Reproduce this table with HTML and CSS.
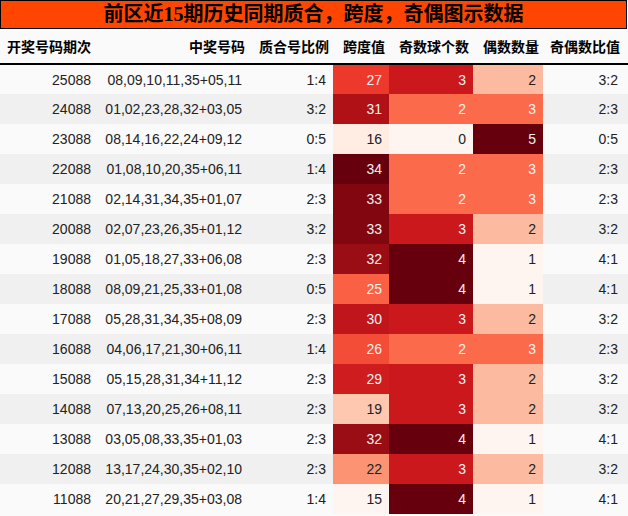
FILE: index.html
```html
<!DOCTYPE html>
<html lang="zh">
<head>
<meta charset="utf-8">
<title>前区近15期历史同期质合，跨度，奇偶图示数据</title>
<link rel="stylesheet" href="styles.css">
</head>
<body>
<div class="page">
  <div class="title">前区近15期历史同期质合，跨度，奇偶图示数据</div>
  <table class="grid">
    <colgroup>
      <col class="c1"><col class="c2"><col class="c3"><col class="c4"><col class="c5"><col class="c6"><col class="c7">
    </colgroup>
    <thead>
      <tr>
        <th class="left">开奖号码期次</th>
        <th>中奖号码</th>
        <th>质合号比例</th>
        <th>跨度值</th>
        <th>奇数球个数</th>
        <th>偶数数量</th>
        <th class="last">奇偶数比值</th>
      </tr>
    </thead>
    <tbody>
      <tr><td>25088</td><td>08,09,10,11,35+05,11</td><td>1:4</td><td class="lt" style="background:#ed392b">27</td><td class="lt" style="background:#cb181d">3</td><td style="background:#fcbba1">2</td><td class="last">3:2</td></tr>
      <tr><td>24088</td><td>01,02,23,28,32+03,05</td><td>3:2</td><td class="lt" style="background:#af1117">31</td><td class="lt" style="background:#fb6a4a">2</td><td class="lt" style="background:#fb6a4a">3</td><td class="last">2:3</td></tr>
      <tr><td>23088</td><td>08,14,16,22,24+09,12</td><td>0:5</td><td style="background:#ffece3">16</td><td style="background:#fff5f0">0</td><td class="lt" style="background:#67000d">5</td><td class="last">0:5</td></tr>
      <tr><td>22088</td><td>01,08,10,20,35+06,11</td><td>1:4</td><td class="lt" style="background:#67000d">34</td><td class="lt" style="background:#fb6a4a">2</td><td class="lt" style="background:#fb6a4a">3</td><td class="last">2:3</td></tr>
      <tr><td>21088</td><td>02,14,31,34,35+01,07</td><td>2:3</td><td class="lt" style="background:#810610">33</td><td class="lt" style="background:#fb6a4a">2</td><td class="lt" style="background:#fb6a4a">3</td><td class="last">2:3</td></tr>
      <tr><td>20088</td><td>02,07,23,26,35+01,12</td><td>3:2</td><td class="lt" style="background:#810610">33</td><td class="lt" style="background:#cb181d">3</td><td style="background:#fcbba1">2</td><td class="last">3:2</td></tr>
      <tr><td>19088</td><td>01,05,18,27,33+06,08</td><td>2:3</td><td class="lt" style="background:#9b0d14">32</td><td class="lt" style="background:#67000d">4</td><td style="background:#fff5f0">1</td><td class="last">4:1</td></tr>
      <tr><td>18088</td><td>08,09,21,25,33+01,08</td><td>0:5</td><td class="lt" style="background:#f96044">25</td><td class="lt" style="background:#67000d">4</td><td style="background:#fff5f0">1</td><td class="last">4:1</td></tr>
      <tr><td>17088</td><td>05,28,31,34,35+08,09</td><td>2:3</td><td class="lt" style="background:#bf151b">30</td><td class="lt" style="background:#cb181d">3</td><td style="background:#fcbba1">2</td><td class="last">3:2</td></tr>
      <tr><td>16088</td><td>04,06,17,21,30+06,11</td><td>1:4</td><td class="lt" style="background:#f34c37">26</td><td class="lt" style="background:#fb6a4a">2</td><td class="lt" style="background:#fb6a4a">3</td><td class="last">2:3</td></tr>
      <tr><td>15088</td><td>05,15,28,31,34+11,12</td><td>2:3</td><td class="lt" style="background:#cf1c1f">29</td><td class="lt" style="background:#cb181d">3</td><td style="background:#fcbba1">2</td><td class="last">3:2</td></tr>
      <tr><td>14088</td><td>07,13,20,25,26+08,11</td><td>2:3</td><td style="background:#fdc7b0">19</td><td class="lt" style="background:#cb181d">3</td><td style="background:#fcbba1">2</td><td class="last">3:2</td></tr>
      <tr><td>13088</td><td>03,05,08,33,35+01,03</td><td>2:3</td><td class="lt" style="background:#9b0d14">32</td><td class="lt" style="background:#67000d">4</td><td style="background:#fff5f0">1</td><td class="last">4:1</td></tr>
      <tr><td>12088</td><td>13,17,24,30,35+02,10</td><td>2:3</td><td style="background:#fc9474">22</td><td class="lt" style="background:#cb181d">3</td><td style="background:#fcbba1">2</td><td class="last">3:2</td></tr>
      <tr><td>11088</td><td>20,21,27,29,35+03,08</td><td>1:4</td><td style="background:#fff5f0">15</td><td class="lt" style="background:#67000d">4</td><td style="background:#fff5f0">1</td><td class="last">4:1</td></tr>
    </tbody>
  </table>
</div>
</body>
</html>
```

FILE: styles.css
```css
* { box-sizing: border-box; }

html, body {
  margin: 0;
  padding: 0;
  background: #fafafa;
}

.page {
  width: 628px;
  display: flex;
  flex-direction: column;
}

.title {
  height: 29px;
  width: 627px;
  background: #ff4500;
  border: 1px solid #000;
  color: #000;
  font-family: "Liberation Serif", "Noto Sans CJK SC", serif;
  font-weight: bold;
  font-size: 20px;
  line-height: 27px;
  text-align: center;
}

.grid {
  width: 628px;
  border-collapse: collapse;
  table-layout: fixed;
  font-family: "Liberation Sans", "Noto Sans CJK SC", sans-serif;
  font-size: 14px;
  color: #222;
}

.c1 { width: 98px; }
.c2 { width: 151px; }
.c3 { width: 84px; }
.c4 { width: 56px; }
.c5 { width: 84px; }
.c6 { width: 70px; }
.c7 { width: 85px; }

.grid th {
  height: 35px;
  padding: 0 4px 0 0;
  text-align: right;
  font-family: "Noto Sans CJK SC", sans-serif;
  font-weight: bold;
  font-size: 14px;
  color: #000;
  background: #fafafa;
  border-bottom: 2px solid #000;
  white-space: nowrap;
}

.grid th.left {
  text-align: left;
  padding-left: 7px;
}

.grid th.last { padding-right: 8px; }

.grid td {
  height: 30px;
  padding: 0 7px 0 0;
  text-align: right;
  vertical-align: middle;
  white-space: nowrap;
}

.grid td.last { padding-right: 10px; }

.grid tbody tr:nth-child(odd) { background: #fafafa; }
.grid tbody tr:nth-child(even) { background: #f0f0f0; }

.grid td.lt { color: #f1f1f1; }
```
